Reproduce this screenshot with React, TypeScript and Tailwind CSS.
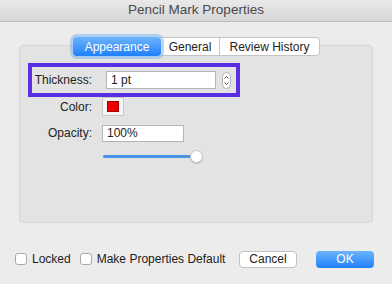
export default function App() {
  return (
    <div
      className="w-[392px] h-[284px] bg-[#ececec] flex flex-col overflow-hidden text-[12px] text-[#222] whitespace-nowrap"
      style={{ fontFamily: '"Liberation Sans", Arial, sans-serif' }}
    >
      {/* Title bar */}
      <div className="h-[22px] shrink-0 flex items-center justify-center bg-gradient-to-b from-[#e9e9e9] to-[#d6d6d6] border-b border-[#bcbcbc] text-[#4a4a4a] text-[13.5px]">
        Pencil Mark Properties
      </div>

      {/* Tabs */}
      <div className="relative z-10 mt-[15px] flex justify-center">
        <div className="flex h-[19px] ml-[1px]">
          <div className="relative z-10 w-[88px] flex items-center justify-center rounded-[4px] bg-gradient-to-b from-[#6bb4fb] to-[#1b7ffa] text-white shadow-[0_0_0_3px_rgba(120,175,240,0.5)]">
            Appearance
          </div>
          <div className="w-[59px] flex items-center justify-center bg-white border-y border-r border-[#c4c4c4]">
            General
          </div>
          <div className="w-[100px] flex items-center justify-center bg-white border-y border-r border-[#c4c4c4] rounded-r-[4px]">
            Review History
          </div>
        </div>
      </div>

      {/* Panel */}
      <div className="mx-[19px] -mt-[11px] h-[178px] rounded-[4px] bg-[#e3e3e3] border border-[#d5d5d5] pt-[17px] pl-[8px]">
        <div className="w-[212px] h-[34px] border-[4px] border-[#5a2fe3] flex items-center">
          <div className="w-[60px] text-right">Thickness:</div>
          <div className="ml-[14px] w-[110px] h-[18px] bg-white border border-[#b5b5b5] flex items-center pl-[4px]">
            1 pt
          </div>
          <div className="ml-[6px] w-[9px] h-[17px] rounded-full bg-white border border-[#b0b0b0] flex items-center justify-center">
            <svg width="7" height="13" viewBox="0 0 7 13" fill="none" stroke="#555" strokeWidth="1">
              <path d="M1.5 4.5 L3.5 2.5 L5.5 4.5" />
              <path d="M1.5 8.5 L3.5 10.5 L5.5 8.5" />
            </svg>
          </div>
        </div>

        <div className="flex items-center h-[19px] -ml-[8px]">
          <div className="w-[72px] text-right">Color:</div>
          <div className="ml-[10px] w-[22px] h-[19px] bg-[#f4f4f4] border border-[#c8c8c8] flex items-center justify-center">
            <div className="w-[12px] h-[11px] bg-[#f00000] border border-[#a00000]" />
          </div>
        </div>

        <div className="flex items-center mt-[8px] -ml-[8px]">
          <div className="w-[72px] text-right">Opacity:</div>
          <div className="ml-[10px] w-[82px] h-[17px] bg-white border border-[#b5b5b5] flex items-center pl-[4px]">
            100%
          </div>
        </div>

        <div className="flex items-center mt-[8px] ml-[75px] h-[13px]">
          <div className="w-[90px] h-[3px] rounded-full bg-[#4a92e6]" />
          <div className="-ml-[3px] w-[13px] h-[13px] rounded-full bg-white border border-[#c2c2c2] shadow-[0_1px_1px_rgba(0,0,0,0.15)]" />
        </div>
      </div>

      {/* Bottom row */}
      <div className="flex items-center mt-[27px] pl-[15px] pr-[18px]">
        <div className="w-[12px] h-[12px] rounded-[3px] bg-white border border-[#a9a9a9]" />
        <span className="ml-[5px]">Locked</span>
        <div className="ml-[9px] w-[12px] h-[12px] rounded-[3px] bg-white border border-[#a9a9a9]" />
        <span className="ml-[5px]">Make Properties Default</span>
        <div className="ml-auto w-[58px] h-[17px] rounded-[4px] bg-white border border-[#c2c2c2] flex items-center justify-center">
          Cancel
        </div>
        <div className="ml-[19px] w-[58px] h-[17px] rounded-[4px] bg-gradient-to-b from-[#6bb4fb] to-[#1b7ffa] text-white flex items-center justify-center">
          OK
        </div>
      </div>
    </div>
  );
}
